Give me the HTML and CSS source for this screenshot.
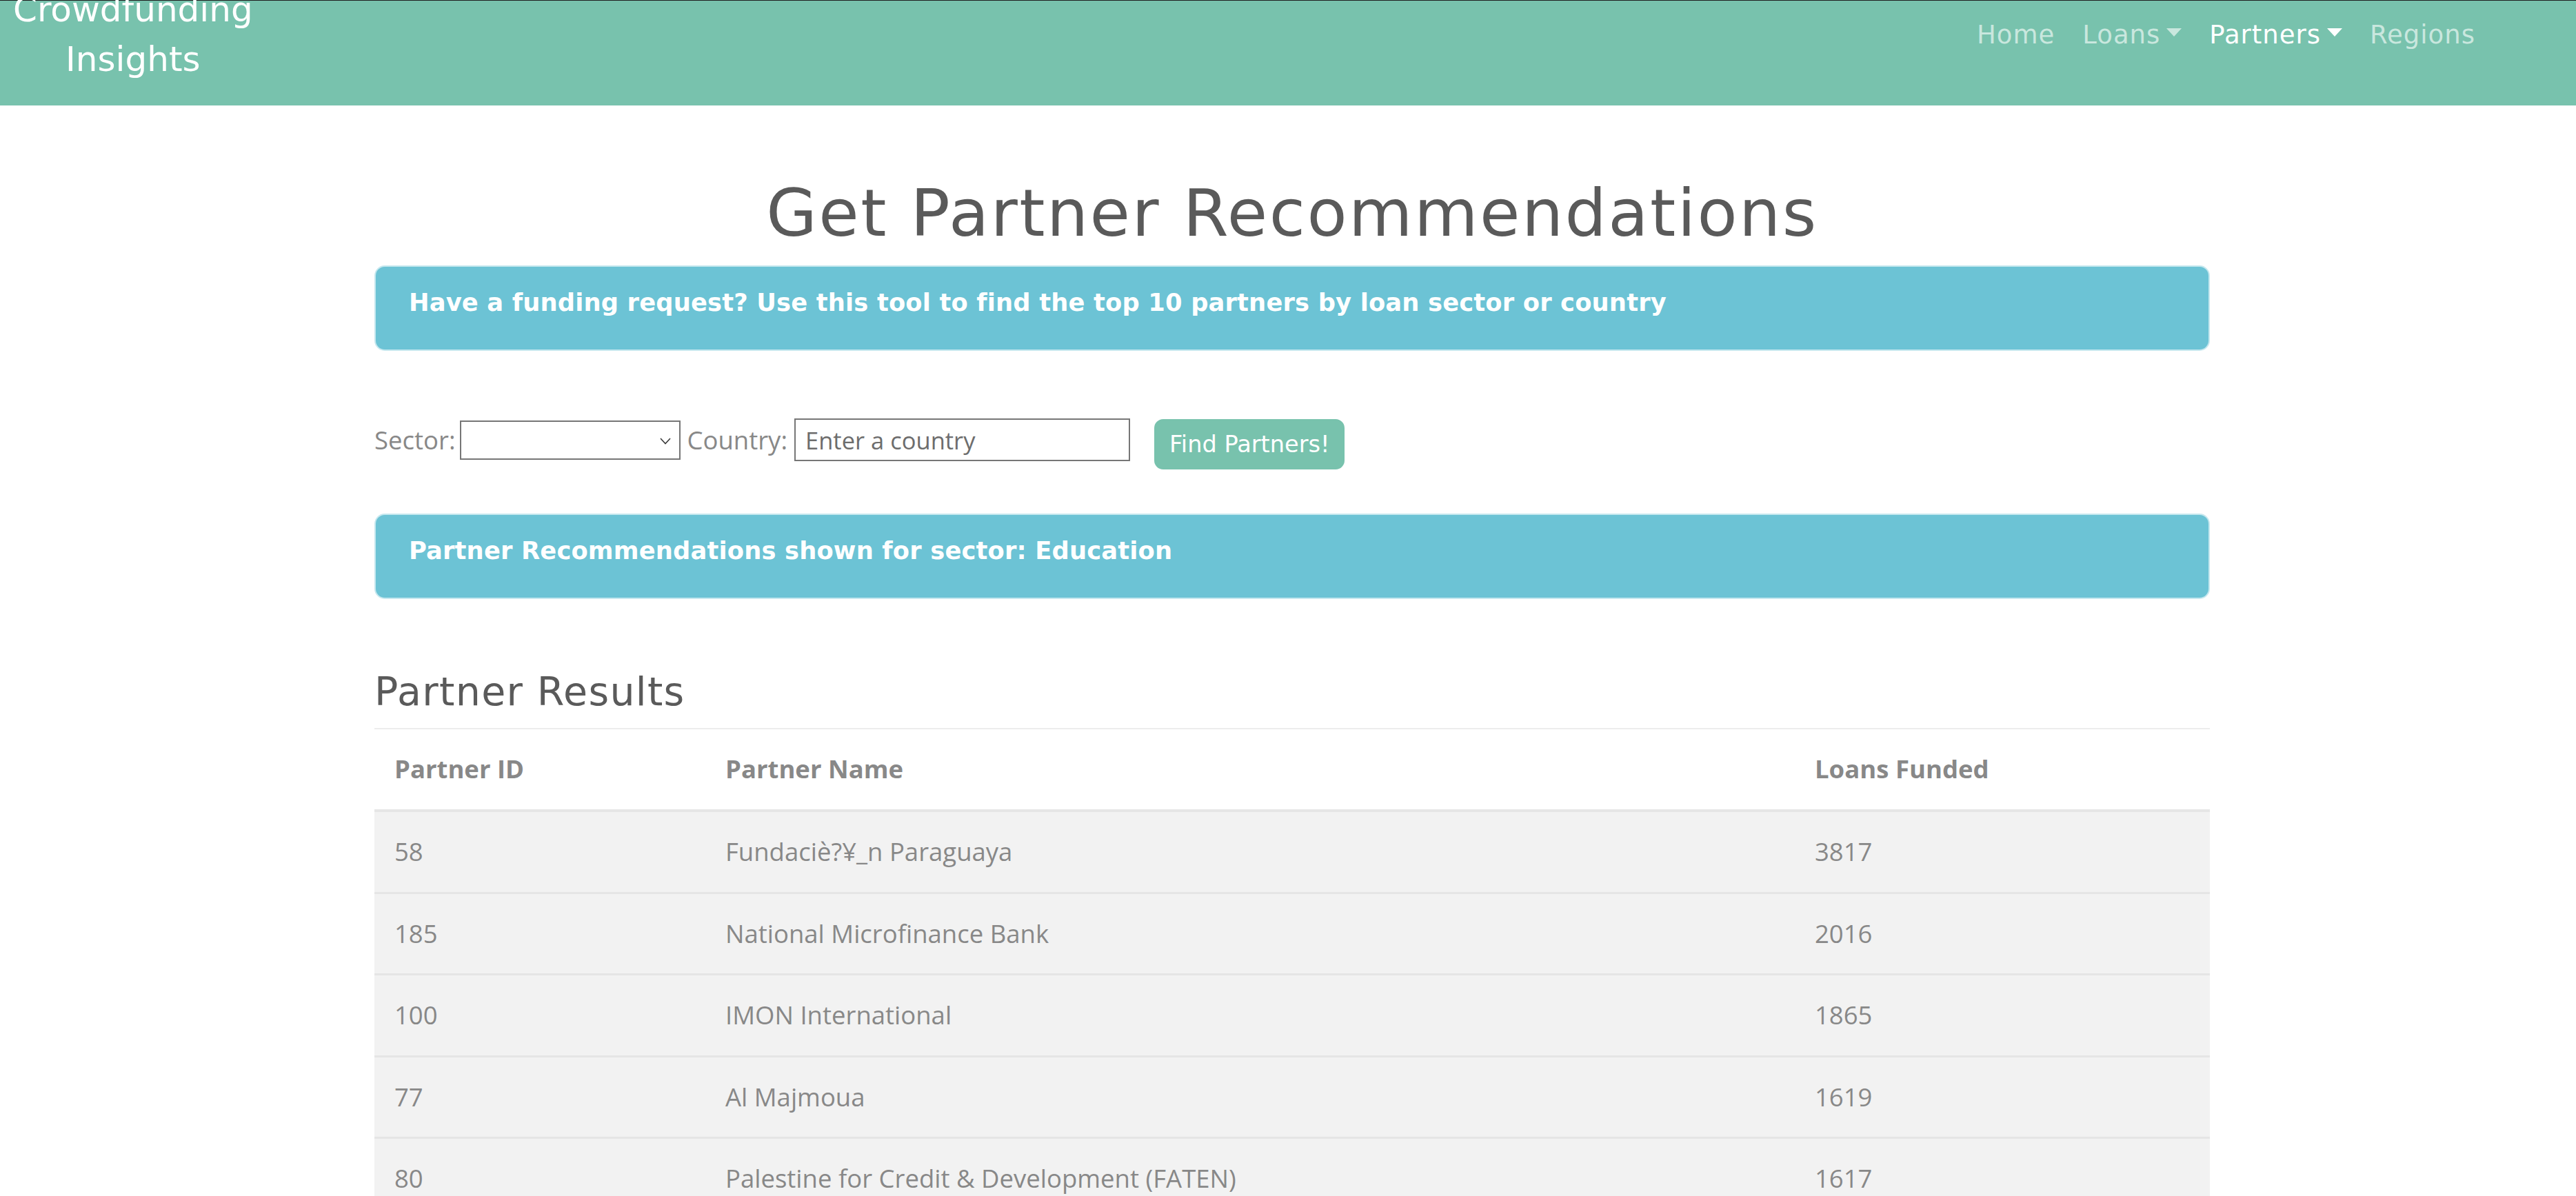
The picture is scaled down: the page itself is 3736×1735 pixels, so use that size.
FILE: index.html
```html
<!DOCTYPE html>
<html lang="en">
<head>
<meta charset="utf-8">
<title>Get Partner Recommendations</title>
<link rel="stylesheet" href="styles.css">
</head>
<body>
<nav class="navbar">
  <a class="brand" href="#">Crowdfunding Insights</a>
  <ul class="nav">
    <li><a class="nav-link" href="#">Home</a></li>
    <li><a class="nav-link dropdown" href="#">Loans</a></li>
    <li><a class="nav-link dropdown active" href="#">Partners</a></li>
    <li><a class="nav-link" href="#">Regions</a></li>
  </ul>
</nav>
<main class="container">
  <h1 class="title">Get Partner Recommendations</h1>
  <div class="alert">
    <h6 class="alert-text">Have a funding request? Use this tool to find the top 10 partners by loan sector or country</h6>
  </div>
  <form class="finder">
    <label class="lbl lbl-sector" for="sector">Sector:</label>
    <div class="select-wrap">
      <select id="sector" class="select"><option></option></select>
      <svg class="chev" width="16" height="10" viewBox="0 0 16 10"><path d="M1 1 L8 8.5 L15 1" fill="none" stroke="#3a3a3a" stroke-width="1.6"/></svg>
    </div>
    <label class="lbl lbl-country" for="country">Country:</label>
    <input id="country" class="country" type="text" placeholder="Enter a country">
    <button class="btn" type="button">Find Partners!</button>
  </form>
  <div class="alert alert-result">
    <h6 class="alert-text">Partner Recommendations shown for sector: Education</h6>
  </div>
  <h4 class="section-title">Partner Results</h4>
  <table class="results">
    <colgroup><col class="c1"><col class="c2"><col class="c3"></colgroup>
    <thead>
      <tr><th>Partner ID</th><th>Partner Name</th><th>Loans Funded</th></tr>
    </thead>
    <tbody>
      <tr><td>58</td><td>Fundaciè?¥_n Paraguaya</td><td>3817</td></tr>
      <tr><td>185</td><td>National Microfinance Bank</td><td>2016</td></tr>
      <tr><td>100</td><td>IMON International</td><td>1865</td></tr>
      <tr><td>77</td><td>Al Majmoua</td><td>1619</td></tr>
      <tr><td>80</td><td>Palestine for Credit &amp; Development (FATEN)</td><td>1617</td></tr>
    </tbody>
  </table>
</main>
</body>
</html>
```
FILE: styles.css
```css
html, body {
  margin: 0;
  padding: 0;
  background: #ffffff;
  overflow: hidden;
}

body {
  font-family: "Open Sans", "Liberation Sans", sans-serif;
  font-size: 36.5px;
  color: #888888;
}

/* ---------- navbar ---------- */
.navbar {
  display: flex;
  align-items: flex-start;
  height: 152px;
  border-top: 1px solid #1e1e1e;
  background: #78c2ad;
}

.brand {
  width: min-content;
  margin: -23px 0 0 19px;
  font-family: "DejaVu Sans", sans-serif;
  font-size: 50px;
  line-height: 72px;
  text-align: center;
  color: #ffffff;
  text-decoration: none;
}

.nav {
  display: flex;
  list-style: none;
  margin: 3px 126px 0 auto;
  padding: 0;
}

.nav-link {
  display: block;
  padding: 19px 20px;
  font-family: "DejaVu Sans", sans-serif;
  font-size: 37px;
  letter-spacing: 1px;
  line-height: 55.5px;
  color: #c9e7de;
  text-decoration: none;
}

.nav-link.active {
  color: #ffffff;
}

.dropdown::after {
  content: "";
  display: inline-block;
  margin-left: 9px;
  vertical-align: 10px;
  border-top: 12px solid currentColor;
  border-left: 11.5px solid transparent;
  border-right: 11.5px solid transparent;
}

/* ---------- main ---------- */
.container {
  width: 2662px;
  margin-left: 543px;
  padding-top: 99px;
}

.title {
  margin: 0 0 19px;
  font-family: "DejaVu Sans", sans-serif;
  font-weight: normal;
  font-size: 95px;
  letter-spacing: 2.45px;
  line-height: 114px;
  text-align: center;
  color: #5a5a5a;
}

.alert {
  border: 2px solid #c6e8ef;
  border-radius: 15px;
  background: #6cc3d5;
  padding: 29px 48px;
}

.alert-text {
  margin: 0 0 16px;
  font-family: "DejaVu Sans", sans-serif;
  font-weight: bold;
  font-size: 35.3px;
  letter-spacing: 0.15px;
  line-height: 46px;
  color: #ffffff;
}

.alert-result {
  margin-top: 64px;
}

/* ---------- form ---------- */
.finder {
  display: flex;
  align-items: flex-start;
  margin-top: 98px;
}

.lbl {
  margin-top: 3px;
  line-height: 57.6px;
  color: #888888;
}

.select-wrap {
  position: relative;
  margin: 3px 9px 0 7px;
}

.select {
  display: block;
  width: 320px;
  height: 57px;
  margin: 0;
  border: 2px solid #767676;
  border-radius: 0;
  background: #ffffff;
  appearance: none;
  -webkit-appearance: none;
}

.chev {
  position: absolute;
  right: 14px;
  top: 25px;
}

.country {
  box-sizing: border-box;
  width: 487px;
  height: 62px;
  margin: 0 35px 0 10px;
  padding: 0 14px;
  border: 2px solid #767676;
  border-radius: 0;
  font-family: "Open Sans", "Liberation Sans", sans-serif;
  font-size: 34.5px;
  color: #555555;
}

.country::placeholder {
  color: #6d6d6d;
  opacity: 1;
}

.btn {
  box-sizing: border-box;
  height: 73px;
  margin-top: 1px;
  padding: 0 20px;
  border: 2px solid #78c2ad;
  border-radius: 13px;
  background: #78c2ad;
  font-family: "DejaVu Sans", sans-serif;
  font-size: 33.6px;
  line-height: 69px;
  color: #ffffff;
}

/* ---------- results ---------- */
.section-title {
  margin: 100px 0 19px;
  font-family: "DejaVu Sans", sans-serif;
  font-weight: normal;
  font-size: 57px;
  letter-spacing: 1.3px;
  line-height: 68.4px;
  color: #5a5a5a;
}

.results {
  width: 2662px;
  table-layout: fixed;
  border-collapse: collapse;
  border-top: 2px solid #ededed;
}

.c1 { width: 480px; }
.c2 { width: 1580px; }
.c3 { width: 602px; }

.results th,
.results td {
  padding: 29px 29px;
  line-height: 57.6px;
  text-align: left;
  vertical-align: top;
}

.results th {
  font-weight: bold;
  border-bottom: 4px solid #e6e6e6;
}

.results tbody tr {
  background: #f2f2f2;
}

.results tbody tr + tr td {
  border-top: 3px solid #e5e5e5;
}
```
